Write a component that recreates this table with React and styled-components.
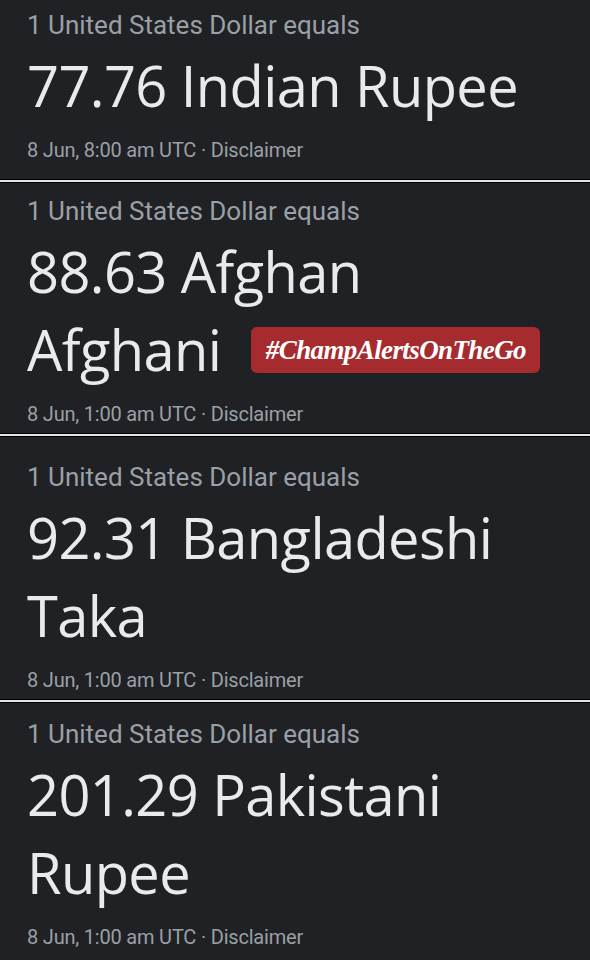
import React from "react";
import styled, { createGlobalStyle } from "styled-components";

const GlobalStyle = createGlobalStyle`
  html, body {
    margin: 0;
    padding: 0;
    background: #202124;
  }
`;

const Page = styled.div`
  width: 590px;
  height: 960px;
  overflow: hidden;
  background: #202124;
  display: flex;
  flex-direction: column;
`;

const Card = styled.section`
  padding: ${(p) => p.$top}px 27px ${(p) => p.$bottom}px;
  display: flex;
  flex-direction: column;
`;

const Divider = styled.div`
  height: 2px;
  background: #e4e4e4;
  border-top: 1px solid #000;
  border-bottom: 1px solid #000;
`;

const Caption = styled.div`
  font-family: Roboto, "Liberation Sans", sans-serif;
  font-size: 26px;
  line-height: 30px;
  color: #9aa0a6;
`;

const Amount = styled.div`
  margin-top: 6px;
  font-family: "Open Sans", "Liberation Sans", sans-serif;
  font-size: 56px;
  line-height: 78px;
  color: #e8eaed;
  letter-spacing: -0.6px;
  white-space: nowrap;
`;

const Line = styled.div`
  display: flex;
  align-items: center;
  gap: 30px;
`;

const Tag = styled.span`
  display: inline-flex;
  align-items: center;
  justify-content: center;
  width: 289px;
  height: 46px;
  border-radius: 6px;
  background: #a52b2f;
  color: #fff;
  font-family: "Liberation Serif", "DejaVu Serif", serif;
  font-style: italic;
  font-weight: bold;
  font-size: 27px;
  line-height: 1;
  margin-top: 2px;
`;

const Meta = styled.div`
  margin-top: 13px;
  font-family: Roboto, "Liberation Sans", sans-serif;
  font-size: 20px;
  line-height: 26px;
  color: #9aa0a6;
  letter-spacing: -0.2px;
`;

const rates = [
  { lines: ["77.76 Indian Rupee"], time: "8 Jun, 8:00 am UTC", top: 10, bottom: 16 },
  { lines: ["88.63 Afghan", "Afghani"], time: "8 Jun, 1:00 am UTC", top: 13, bottom: 6, tag: true },
  { lines: ["92.31 Bangladeshi", "Taka"], time: "8 Jun, 1:00 am UTC", top: 25, bottom: 6 },
  { lines: ["201.29 Pakistani", "Rupee"], time: "8 Jun, 1:00 am UTC", top: 16, bottom: 10 },
];

const App = () => {
  return (
    <>
      <GlobalStyle />
      <Page>
        {rates.map((r, i) => (
          <React.Fragment key={i}>
            {i > 0 && <Divider />}
            <Card $top={r.top} $bottom={r.bottom}>
              <Caption>1 United States Dollar equals</Caption>
              <Amount>
                {r.lines.map((l, j) => (
                  <Line key={j}>
                    {l}
                    {r.tag && j === r.lines.length - 1 && <Tag>#ChampAlertsOnTheGo</Tag>}
                  </Line>
                ))}
              </Amount>
              <Meta>{r.time} · Disclaimer</Meta>
            </Card>
          </React.Fragment>
        ))}
      </Page>
    </>
  );
};

export default App;
